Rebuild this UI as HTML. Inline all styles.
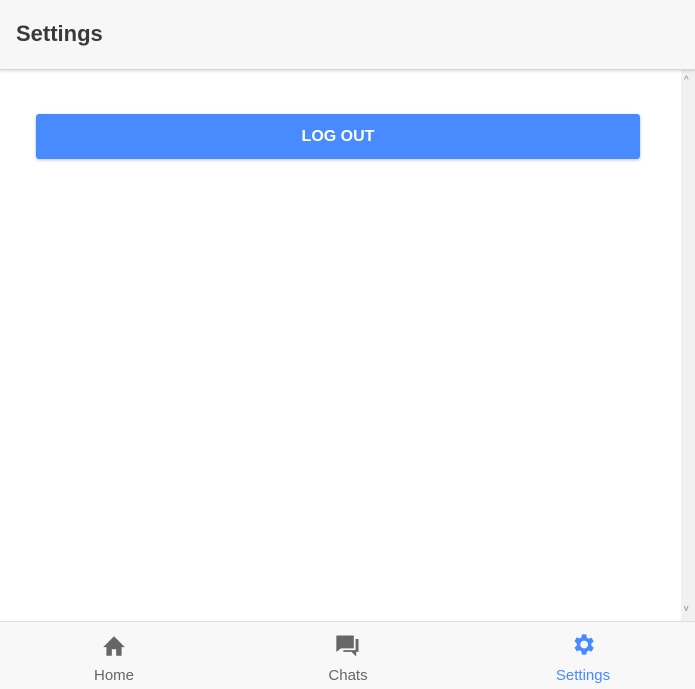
<!DOCTYPE html>
<html><head><style>
body{margin:0;width:695px;height:688px;position:relative;overflow:hidden;background:#fff;font-family:"Liberation Sans",sans-serif;}
.hdr{position:absolute;left:0;top:0;width:695px;height:69px;background:#f7f7f7;border-bottom:1px solid #d8d8d8;box-shadow:0 1px 3px rgba(0,0,0,.15);z-index:2}
.hdr span{position:absolute;left:16px;top:21px;font-size:22px;font-weight:bold;color:#3a3a3a;}
.sb{position:absolute;left:681px;top:69px;width:14px;height:552px;background:#f1f1f1;}
.btn{position:absolute;left:36px;top:114px;width:604px;height:45px;background:#488aff;border-radius:3px;box-shadow:0 1px 3px rgba(0,0,0,.25);color:#fff;font-size:16px;font-weight:bold;text-align:center;line-height:45px;}
.tab{position:absolute;left:0;top:621px;width:695px;height:67px;background:#f8f8f8;border-top:1px solid #ddd;}
.t{position:absolute;top:0;width:228px;text-align:center;font-size:15px;color:#666;}
.t svg{display:block;margin:11px auto 8px;}
</style></head><body>
<div class="hdr"><span>Settings</span></div>
<div class="sb"><div style="position:absolute;left:3px;top:6px;font-size:10px;color:#888">^</div><div style="position:absolute;left:3px;top:534px;font-size:9px;color:#888">v</div></div>
<div class="btn">LOG OUT</div>
<div class="tab">
<div class="t" style="left:0"><svg width="26" height="26" viewBox="0 0 24 24"><path fill="#666" d="M10 21v-6h4v6h5v-8h3L12 3 2 13h3v8z"/></svg>Home</div>
<div class="t" style="left:234px"><svg width="28" height="28" viewBox="0 0 24 24" style="margin-top:10px;margin-bottom:7px"><path fill="#666" d="M2 3h15v11H6l-4 3z"/><path fill="#666" d="M18.5 6H21v11h-2v4l-4-4H8v-1.5h10.5z"/></svg>Chats</div>
<div class="t" style="left:469px;color:#488aff"><svg width="28" height="27" viewBox="0 0 24 24" style="margin-top:9px;margin-bottom:9px"><path fill="#488aff" d="M19.4 13c.04-.33.1-.66.1-1s-.06-.67-.1-1l2.1-1.650-2-3.46-2.5 1c-.52-.4-1.08-.73-1.7-.98L15 3h-4l-.38 2.65c-.62.25-1.180.58-1.7.98l-2.5-1-2 3.46L6.5 11c-.04.33-.1.66-.1 1s.06.67.1 1l-2.1 1.65 2 3.46 2.5-1c.52.4 1.08.73 1.7.98L11 21h4l.38-2.65c.62-.25 1.18-.58 1.7-.98l2.5 1 2-3.46zM13 15.5a3.5 3.5 0 110-7 3.5 3.5 0 010 7z"/></svg>Settings</div>
</div>
</body></html>
